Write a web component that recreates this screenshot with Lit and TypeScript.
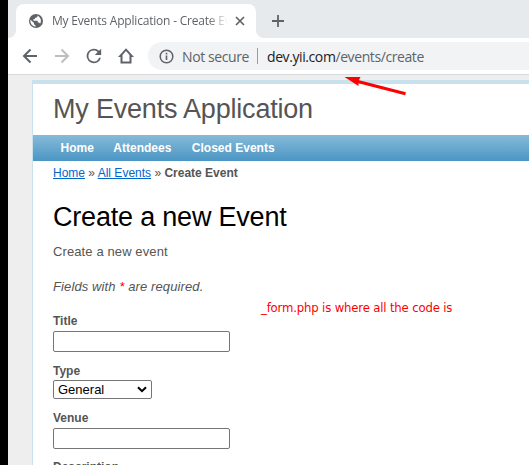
import { LitElement, html, css } from "lit";
import { customElement } from "lit/decorators.js";

@customElement("browser-chrome")
class BrowserChrome extends LitElement {
  static styles = css`
    :host { display: block; font-family: "Open Sans", "Noto Sans", sans-serif; color: #5f6368; }
    .strip { height: 38px; background: #e7eaed; display: flex; align-items: flex-end; padding-left: 8px; }
    .tab { position: relative; box-sizing: border-box; width: 240px; height: 34px; flex: none; background: #fff; border-radius: 8px 8px 0 0; display: flex; align-items: center; padding-left: 13px; }
    .tab::before, .tab::after { content: ""; position: absolute; bottom: 0; width: 8px; height: 8px; }
    .tab::before { left: -8px; background: radial-gradient(circle at 0 0, transparent 7.5px, #fff 8.5px); }
    .tab::after { right: -8px; background: radial-gradient(circle at 100% 0, transparent 7.5px, #fff 8.5px); }
    .title { width: 176px; margin-left: 9px; font-size: 12px; letter-spacing: -0.2px; line-height: 20px; white-space: nowrap; overflow: hidden; -webkit-mask-image: linear-gradient(90deg, #000 156px, transparent 176px); }
    .close { margin-left: 7px; }
    .plus { margin: 0 0 11px 16px; }
    svg { display: block; flex: none; }
    .bar { height: 36px; background: #fff; display: flex; align-items: center; padding-left: 14px; border-bottom: 1px solid #d7d9dd; }
    .bar > svg { margin-right: 16px; }
    .omni { flex: 1; height: 28px; border-radius: 14px 0 0 14px; background: #f1f3f4; display: flex; align-items: center; padding-left: 11px; margin-left: -2px; font-size: 14px; white-space: nowrap; }
    .secure { margin-left: 8px; width: 67px; letter-spacing: -0.4px; }
    .sep { width: 1px; height: 16px; background: #9a9da1; margin: 0 9px 0 8px; }
    .url { letter-spacing: -0.41px; }
    .host { color: #202124; }
  `;
  render() {
    return html`
      <div class="strip">
        <div class="tab">
          <svg width="14" height="14" viewBox="0 0 14 14"><circle cx="7" cy="7" r="7" fill="#5f6368"/><path d="M1.500 5.800 5 9v1.200l1.600 1.300v1.200A5.700 5.700 0 0 1 1.500 5.800ZM8.500 1.600v1L7.300 3.700H6v1.300H4.500v1.700h4.200v1.800h1.400l1 1.200A5.700 5.700 0 0 0 8.500 1.600Z" fill="#fff"/></svg>
          <span class="title">My Events Application - Create Event</span>
          <svg class="close" width="10" height="10" viewBox="0 0 10 10"><path d="m1 1 8 8M9 1 1 9" stroke="#5f6368" stroke-width="1.7"/></svg>
        </div>
        <svg class="plus" width="12" height="12" viewBox="0 0 12 12"><path d="M6 0v12M0 6h12" stroke="#5f6368" stroke-width="1.8"/></svg>
      </div>
      <div class="bar">
        <svg width="16" height="16" viewBox="0 0 16 16" fill="none" stroke="#5f6368" stroke-width="2"><path d="M15 8H2.500M8.500 1.500 2 8l6.500 6.500"/></svg>
        <svg width="16" height="16" viewBox="0 0 16 16" fill="none" stroke="#bcbec1" stroke-width="2"><path d="M1 8h12.500M7.500 1.500 14 8l-6.500 6.500"/></svg>
        <svg width="16" height="16" viewBox="3.300 3.300 17.600 17.600" fill="#5f6368"><path d="M17.650 6.350A8 8 0 1 0 19.730 14h-2.080A6 6 0 1 1 12 6c1.660 0 3.140.690 4.220 1.780L13 11h7V4Z"/></svg>
        <svg width="16" height="16" viewBox="0 0 16 16" fill="#5f6368" fill-rule="evenodd"><path d="M8 .2 0 9h2.500v6.500h11V9H16ZM8 3 4.500 7v6.500h7V7Z"/></svg>
        <div class="omni">
          <svg width="15" height="15" viewBox="0 0 15 15"><circle cx="7.500" cy="7.500" r="6.300" fill="none" stroke="#5f6368" stroke-width="1.500"/><path d="M7.500 6.500V11M7.500 3.800v1.600" stroke="#5f6368" stroke-width="1.600"/></svg>
          <span class="secure">Not secure</span><i class="sep"></i>
          <span class="url"><span class="host">dev.yii.com</span>/events/create</span>
        </div>
      </div>`;
  }
}

@customElement("event-page")
class EventPage extends LitElement {
  static styles = css`
    :host { display: block; height: 390px; background: #eee; padding: 5px 0 0 24px; box-sizing: border-box; font-family: "Liberation Sans", Arial, sans-serif; font-size: 13px; color: #555; overflow: hidden; }
    .page { border-left: 1px solid #c9e0ed; border-top: 4px solid #c9e0ed; background: #fff; height: 381px; }
    .logo { height: 51px; line-height: 50px; padding-left: 20px; font-size: 27px; letter-spacing: -0.2px; }
    nav { height: 26px; display: flex; align-items: center; gap: 19.5px; padding-left: 27.5px; background: linear-gradient(#87bad8, #4a96c4); color: #fff; font-weight: bold; font-size: 12px; }
    nav span:last-child { margin-left: 1px; }
    .content { padding-left: 20px; }
    .crumbs { height: 23px; line-height: 24px; font-size: 12px; white-space: nowrap; }
    .crumbs a { color: #06c; text-decoration: underline; }
    h1 { margin: 15px 0 0; font-weight: normal; font-size: 27px; letter-spacing: -0.2px; line-height: 37px; height: 36px; color: #000; }
    p { margin: 0; line-height: 20px; white-space: nowrap; letter-spacing: 0.11px; }
    .lead { margin-top: 7px; }
    .note { margin-top: 15px; font-style: italic; }
    .req { color: red; }
    form { margin-top: 16px; }
    label { display: block; font-size: 12px; font-weight: bold; line-height: 16px; }
    input { display: block; box-sizing: border-box; width: 177px; height: 21px; margin: 2px 0 0; border: 1px solid #767676; border-radius: 2px; background: #fff; padding: 1px 2px; }
    .row { margin-bottom: 11px; }
    .row:nth-child(3) { margin-bottom: 10px; }
    .select { box-sizing: border-box; width: 99px; height: 19px; border: 1px solid #767676; border-radius: 2px; display: flex; align-items: center; justify-content: space-between; padding: 0 4px; font-size: 13px; color: #000; margin-top: 1px; }
  `;
  render() {
    return html`
      <div class="page">
        <div class="logo">My Events Application</div>
        <nav><span>Home</span><span>Attendees</span><span>Closed Events</span></nav>
        <div class="content">
          <div class="crumbs"><a>Home</a> » <a>All Events</a> » <b>Create Event</b></div>
          <h1>Create a new Event</h1>
          <p class="lead">Create a new event</p>
          <p class="note">Fields with <span class="req">*</span> are required.</p>
          <form>
            <div class="row"><label>Title</label><input /></div>
            <div class="row"><label>Type</label><div class="select">General<svg width="10" height="7" viewBox="0 0 10 7"><path d="m1 1.200 4 4 4-4" fill="none" stroke="#000" stroke-width="2"/></svg></div></div>
            <div class="row"><label>Venue</label><input /></div>
            <div class="row"><label>Description</label></div>
          </form>
        </div>
      </div>`;
  }
}

@customElement("app-root")
class AppRoot extends LitElement {
  static styles = css`
    :host { display: block; position: relative; box-sizing: border-box; width: 529px; height: 465px; border-left: 8px solid #000; overflow: hidden; }
    .arrow { position: absolute; left: 336px; top: 76px; }
    .memo { position: absolute; left: 253px; top: 299px; font: 13px/18px "DejaVu Sans Condensed", "DejaVu Sans", sans-serif; letter-spacing: -0.17px; color: #f00; white-space: nowrap; }
  `;
  render() {
    return html`
      <browser-chrome></browser-chrome>
      <event-page></event-page>
      <svg class="arrow" width="64" height="22" viewBox="0 0 64 22"><path d="M10 4.500 61.500 17.800" stroke="#f00" stroke-width="3"/><path d="M.5 1 16.500 1 14.500 5 14.500 10Z" fill="#f00"/></svg>
      <div class="memo">_form.php is where all the code is</div>`;
  }
}
